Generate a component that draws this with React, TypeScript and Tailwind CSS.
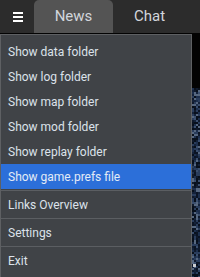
import React from "react";

const noise: { x: number; y: number; c: string }[] = (() => {
  const out: { x: number; y: number; c: string }[] = [];
  let s = 12345;
  const rnd = () => {
    s = (s * 1103515245 + 12345) & 0x7fffffff;
    return s / 0x7fffffff;
  };
  const cols = ["#0b1424", "#14223a", "#1d2f4d", "#2a3d5c", "#3b4f6e", "#08101c", "#56677f", "#101a2c"];
  for (let y = 0; y < 190; y += 2) {
    for (let x = 0; x < 10; x += 2) {
      out.push({ x, y, c: cols[Math.floor(rnd() * cols.length)] });
    }
  }
  return out;
})();

const items = [
  "Show data folder",
  "Show log folder",
  "Show map folder",
  "Show mod folder",
  "Show replay folder",
];

function Sep() {
  return <div className="my-px h-px bg-[#5b5e62]" />;
}

function Item({ label, active }: { label: string; active?: boolean }) {
  return (
    <div
      className={`h-[25px] flex items-center pl-[7px] text-[12px] leading-none ${
        active ? "bg-[#2c6fd9] text-[#e3ebf6]" : "text-[#dce2ea]"
      }`}
    >
      {label}
    </div>
  );
}

export default function App() {
  return (
    <div
      className="relative w-[200px] h-[277px] overflow-hidden bg-[#2b2b2b]"
      style={{ fontFamily: 'Roboto, "Noto Sans", sans-serif' }}
    >
      <div className="flex h-[33px] bg-[#2c2c2c]">
        <div className="w-[34px] flex items-center justify-center">
          <div className="flex flex-col gap-[2px] w-[10px] ml-[1px]">
            <div className="h-[2px] bg-white" />
            <div className="h-[2px] bg-white" />
            <div className="h-[2px] bg-white" />
          </div>
        </div>
        <div className="w-[79px] rounded-t-[5px] bg-[#545454] flex items-center justify-center text-[15px] text-[#d2d6dc]">
          News
        </div>
        <div className="w-[73px] flex items-center justify-center text-[15px] text-[#d2d6dc]">
          Chat
        </div>
      </div>
      <div className="h-[244px] bg-[#030303] flex flex-col">
        <div className="h-[55px]" />
        <svg width="200" height="190" className="block">
          <rect x="0" y="0" width="200" height="190" fill="#0d1526" />
          {noise.map((n, i) => (
            <rect key={i} x={190 + n.x} y={n.y} width="2" height="2" fill={n.c} />
          ))}
          <rect x="193" y="176" width="3" height="3" fill="#c9ccd0" />
        </svg>
      </div>

      <div className="absolute left-0 top-[34px] w-[192px] h-[250px] bg-[#404347] border border-[#5e6063] pt-[4px]">
        {items.map((t) => (
          <Item key={t} label={t} />
        ))}
        <Item label="Show game.prefs file" active />
        <Sep />
        <Item label="Links Overview" />
        <Sep />
        <Item label="Settings" />
        <Sep />
        <Item label="Exit" />
      </div>
    </div>
  );
}
